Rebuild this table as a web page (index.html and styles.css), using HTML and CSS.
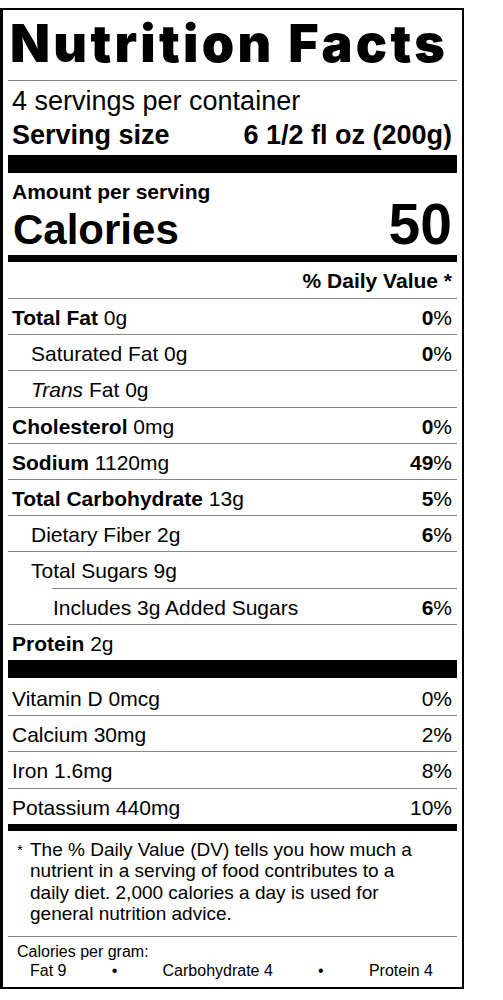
FILE: index.html
```html
<!DOCTYPE html>
<html>
    <head>
        <title>Nutrition Facts</title>
        <meta charset="utf-8">
        <link rel="stylesheet" href="styles.css">
    </head>
    <body>
        <div class="label">
            <h1 class="title">Nutrition Facts</h1>

            <div class="servings">
                <div>4 servings per container</div>
                <div class="serving_size"><span>Serving size</span><span>6 1/2 fl oz (200g)</span></div>
            </div>

            <div class="calories">
                <div class="amount">Amount per serving</div>
                <div class="cal_row"><span class="cal_label">Calories</span><span class="cal_num">50</span></div>
            </div>

            <div class="dv_head">% Daily Value *</div>

            <div class="nutrients">
                <div class="row"><span><b>Total Fat</b> 0g</span><span><b>0</b>%</span></div>
                <div class="row sub"><span>Saturated Fat 0g</span><span><b>0</b>%</span></div>
                <div class="row sub"><span><i>Trans</i> Fat 0g</span></div>
                <div class="row"><span><b>Cholesterol</b> 0mg</span><span><b>0</b>%</span></div>
                <div class="row"><span><b>Sodium</b> 1120mg</span><span><b>49</b>%</span></div>
                <div class="row"><span><b>Total Carbohydrate</b> 13g</span><span><b>5</b>%</span></div>
                <div class="row sub"><span>Dietary Fiber 2g</span><span><b>6</b>%</span></div>
                <div class="row sub sugars"><span>Total Sugars 9g</span></div>
                <div class="row added">
                    <div class="added_inner"><span>Includes 3g Added Sugars</span><span><b>6</b>%</span></div>
                </div>
                <div class="row"><span><b>Protein</b> 2g</span></div>
            </div>

            <div class="vitamins">
                <div class="row"><span>Vitamin D 0mcg</span><span>0%</span></div>
                <div class="row"><span>Calcium 30mg</span><span>2%</span></div>
                <div class="row"><span>Iron 1.6mg</span><span>8%</span></div>
                <div class="row"><span>Potassium 440mg</span><span>10%</span></div>
            </div>

            <div class="footnote">
                <span class="star">*</span>
                <p>The % Daily Value (DV) tells you how much a nutrient in a serving of food contributes to a daily diet. 2,000 calories a day is used for general nutrition advice.</p>
            </div>

            <div class="per_gram">
                <div>Calories per gram:</div>
                <div class="macros">
                    <span>Fat 9</span>
                    <span>&bull;</span>
                    <span>Carbohydrate 4</span>
                    <span>&bull;</span>
                    <span>Protein 4</span>
                </div>
            </div>
        </div>
    </body>
</html>
```

FILE: styles.css
```css
body {
    margin: 0;
    background: #fff;
    color: #000;
    font-family: "Liberation Sans", Arial, sans-serif;
}

.label {
    width: 449px;
    margin-top: 8px;
    padding: 0 5px;
    border: 2px solid #000;
    border-left-width: 3px;
}

.title {
    margin: 0;
    padding: 4px 0 6px 2px;
    font-family: Inter, "DejaVu Sans", sans-serif;
    font-weight: 900;
    font-size: 52px;
    line-height: 60px;
    letter-spacing: 3.3px;
    border-bottom: 1px solid #888;
}

.servings {
    padding: 3px 5px 3px 4px;
    font-size: 27px;
    line-height: 34px;
    border-bottom: 18px solid #000;
}

.serving_size {
    display: flex;
    justify-content: space-between;
    font-weight: bold;
}

.calories {
    padding: 7px 5px 2px 4px;
    font-weight: bold;
    border-bottom: 7px solid #000;
}

.amount {
    font-size: 21px;
    line-height: 24px;
}

.cal_row {
    display: flex;
    justify-content: space-between;
    align-items: baseline;
}

.cal_label {
    padding-left: 1px;
    font-size: 42px;
    line-height: 46px;
}

.cal_num {
    font-size: 57px;
    line-height: 40px;
}

.dv_head {
    padding: 7px 5px 5px;
    text-align: right;
    font-weight: bold;
    font-size: 21px;
    line-height: 24px;
    border-bottom: 1px solid #888;
}

.nutrients {
    border-bottom: 18px solid #000;
}

.vitamins {
    padding-top: 2px;
    border-bottom: 7px solid #000;
}

.row {
    display: flex;
    justify-content: space-between;
    padding: 2px 5px 0 4px;
    font-size: 21px;
    line-height: 33.2px;
    border-bottom: 1px solid #888;
}

.row:last-child {
    border-bottom: none;
}

.sub {
    padding-left: 23px;
}

.sugars {
    border-bottom: none;
}

.added {
    padding: 0;
}

.added_inner {
    flex: 1;
    display: flex;
    justify-content: space-between;
    margin-left: 44px;
    padding: 2px 5px 0 1px;
    border-top: 1px solid #888;
}

.footnote {
    display: flex;
    padding: 8px 30px 11px 9px;
    font-size: 19px;
    line-height: 21.5px;
    border-bottom: 1px solid #888;
}

.star {
    flex: none;
    width: 13px;
    font-size: 15px;
}

.footnote p {
    margin: 0;
}

.per_gram {
    padding: 5px 24px 7px 9px;
    font-size: 16px;
    line-height: 19px;
}

.macros {
    display: flex;
    justify-content: space-between;
    padding-left: 13px;
}
```
